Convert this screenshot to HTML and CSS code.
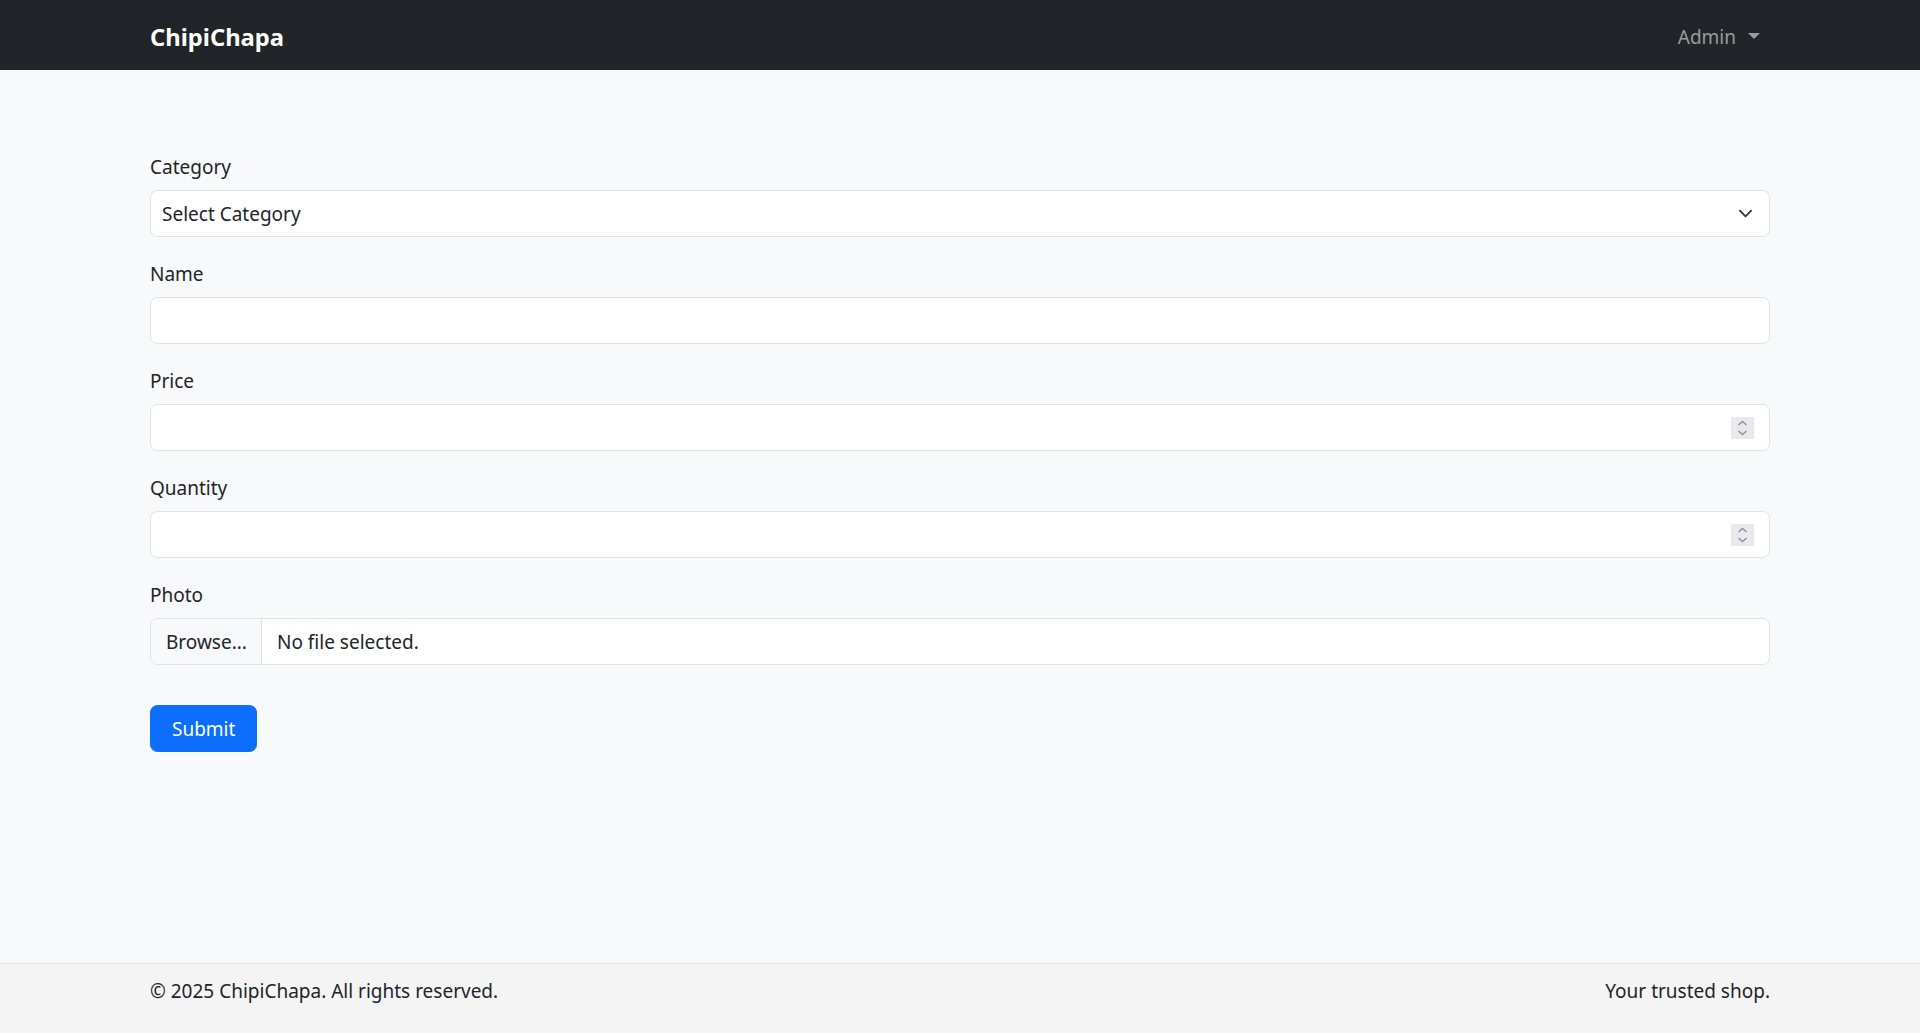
FILE: index.html
```html
<!DOCTYPE html>
<html lang="en">
<head>
    <meta charset="UTF-8" />
    <meta name="viewport" content="width=device-width, initial-scale=1" />
    <title>Add Product - ChipiChapa</title>
    <link rel="stylesheet" href="styles.css">
</head>
<body>
    <nav class="navbar">
        <div class="container navbar-inner">
            <a href="#" class="brand">ChipiChapa</a>
            <a href="#" class="nav-dropdown">Admin<span class="caret"></span></a>
        </div>
    </nav>

    <main class="main-content">
        <div class="container">
            <form class="product-form" onsubmit="return false;">
                <div class="field">
                    <label for="category" class="field-label">Category</label>
                    <div class="select-wrap">
                        <select id="category" class="form-control form-select">
                            <option>Select Category</option>
                        </select>
                        <svg class="select-arrow" width="15" height="15" viewBox="0 0 16 16">
                            <path d="m2 5 6 6 6-6" fill="none" stroke="#343a40" stroke-width="2" stroke-linecap="round" stroke-linejoin="round"/>
                        </svg>
                    </div>
                </div>
                <div class="field">
                    <label for="name" class="field-label">Name</label>
                    <input type="text" id="name" class="form-control">
                </div>
                <div class="field">
                    <label for="price" class="field-label">Price</label>
                    <div class="number-wrap">
                        <input type="number" id="price" class="form-control">
                        <svg class="spinner" width="23" height="22" viewBox="0 0 23 22">
                            <rect width="23" height="22" fill="#e9e9ed"/>
                            <polyline points="7.5,8 11.5,4.5 15.5,8" fill="none" stroke="#8f8f9d" stroke-width="1.5"/>
                            <polyline points="7.5,14 11.5,17.5 15.5,14" fill="none" stroke="#8f8f9d" stroke-width="1.5"/>
                        </svg>
                    </div>
                </div>
                <div class="field">
                    <label for="quantity" class="field-label">Quantity</label>
                    <div class="number-wrap">
                        <input type="number" id="quantity" class="form-control">
                        <svg class="spinner" width="23" height="22" viewBox="0 0 23 22">
                            <rect width="23" height="22" fill="#e9e9ed"/>
                            <polyline points="7.5,8 11.5,4.5 15.5,8" fill="none" stroke="#8f8f9d" stroke-width="1.5"/>
                            <polyline points="7.5,14 11.5,17.5 15.5,14" fill="none" stroke="#8f8f9d" stroke-width="1.5"/>
                        </svg>
                    </div>
                </div>
                <div class="field">
                    <label for="photo" class="field-label">Photo</label>
                    <label class="file-input">
                        <span class="file-button">Browse...</span>
                        <span class="file-name">No file selected.</span>
                        <input type="file" id="photo">
                    </label>
                </div>
                <button type="submit" class="btn-submit">Submit</button>
            </form>
        </div>
    </main>

    <footer class="footer">
        <div class="container footer-inner">
            <span>&copy; 2025 ChipiChapa. All rights reserved.</span>
            <span>Your trusted shop.</span>
        </div>
    </footer>
</body>
</html>
```
FILE: styles.css
```css
:root {
    --dark: #212529;
    --light: #f8f9fa;
    --border: #dee2e6;
    --blue: #0d6efd;
    --white: #ffffff;
}
* {
    margin: 0;
    padding: 0;
    box-sizing: border-box;
}
body {
    display: flex;
    flex-direction: column;
    min-height: 100vh;
    font-family: "Noto Sans", "Open Sans", sans-serif;
    font-size: 19px;
    line-height: 30px;
    color: var(--dark);
    background-color: var(--light);
}
.container {
    width: 100%;
    max-width: 1650px;
    margin: 0 auto;
    padding: 0 15px;
}
/* Navbar */
.navbar {
    background-color: var(--dark);
    padding: 12px 0 8px;
}
.navbar-inner {
    display: flex;
    align-items: center;
    justify-content: space-between;
}
.brand {
    color: var(--white);
    font-size: 23.75px;
    font-weight: 700;
    text-decoration: none;
    padding: 6px 0;
    line-height: 38px;
}
.nav-dropdown {
    color: rgba(255, 255, 255, 0.55);
    text-decoration: none;
    padding: 10px;
}
.caret {
    display: inline-block;
    margin-left: 12px;
    vertical-align: 5px;
    border-top: 6px solid;
    border-left: 6px solid transparent;
    border-right: 6px solid transparent;
}
/* Form */
.main-content {
    flex-grow: 1;
    padding-top: 80px;
}
.field {
    margin-bottom: 20px;
}
.field-label {
    display: inline-block;
    padding-top: 2px;
    margin-bottom: 8px;
}
.form-control {
    display: block;
    width: 100%;
    height: 47px;
    padding: 7.5px 15px;
    font-family: inherit;
    font-size: 19px;
    line-height: 30px;
    color: var(--dark);
    background-color: var(--white);
    border: 1px solid var(--border);
    border-radius: 7.5px;
    appearance: none;
    -moz-appearance: textfield;
}
.form-control::-webkit-outer-spin-button,
.form-control::-webkit-inner-spin-button {
    -webkit-appearance: none;
    margin: 0;
}
.form-select {
    padding: 8px 45px 7px 11px;
}
.select-wrap,
.number-wrap {
    position: relative;
}
.select-arrow {
    position: absolute;
    right: 17px;
    top: 16px;
    pointer-events: none;
}
.spinner {
    position: absolute;
    right: 16px;
    top: 13px;
    pointer-events: none;
}
.file-input {
    display: flex;
    height: 47px;
    background-color: var(--white);
    border: 1px solid var(--border);
    border-radius: 7.5px;
    overflow: hidden;
    cursor: pointer;
}
.file-button {
    display: flex;
    align-items: center;
    padding: 1px 14px 0 15px;
    background-color: var(--light);
    border-right: 1px solid var(--border);
}
.file-name {
    display: flex;
    align-items: center;
    padding: 1px 0 0 15px;
}
.file-input input {
    display: none;
}
.btn-submit {
    align-self: flex-start;
    margin-top: 20px;
    padding: 8px 21px 7px;
    font-family: inherit;
    font-size: 19px;
    line-height: 30px;
    color: var(--white);
    background-color: var(--blue);
    border: 1px solid var(--blue);
    border-radius: 7.5px;
    cursor: pointer;
}
.btn-submit:hover {
    background-color: #0b5ed7;
}
/* Footer */
.footer {
    background-color: #f4f4f4;
    border-top: 1px solid var(--border);
    padding: 12px 0 27px;
}
.footer-inner {
    display: flex;
    justify-content: space-between;
}
```
